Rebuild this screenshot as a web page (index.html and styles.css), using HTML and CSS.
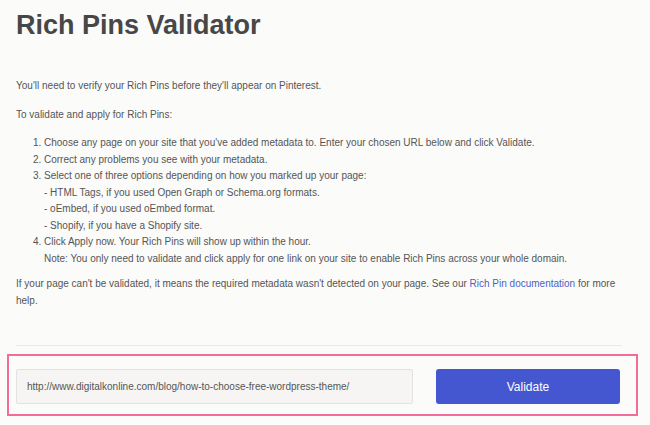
FILE: index.html
```html
<!DOCTYPE html>
<html lang="en">
<head>
    <meta charset="UTF-8">
    <meta name="viewport" content="width=device-width, initial-scale=1.0">
    <title>Rich Pins Validator</title>
    <link rel="stylesheet" href="styles.css">
</head>
<body>
    <div class="page">
        <h1>Rich Pins Validator</h1>

        <p class="intro">You'll need to verify your Rich Pins before they'll appear on Pinterest.</p>

        <p>To validate and apply for Rich Pins:</p>
        <ol class="steps">
            <li>Choose any page on your site that you've added metadata to. Enter your chosen URL below and click Validate.</li>
            <li>Correct any problems you see with your metadata.</li>
            <li>Select one of three options depending on how you marked up your page:
                <div>- HTML Tags, if you used Open Graph or Schema.org formats.</div>
                <div>- oEmbed, if you used oEmbed format.</div>
                <div>- Shopify, if you have a Shopify site.</div>
            </li>
            <li>Click Apply now. Your Rich Pins will show up within the hour.
                <div>Note: You only need to validate and click apply for one link on your site to enable Rich Pins across your whole domain.</div>
            </li>
        </ol>

        <p>If your page can't be validated, it means the required metadata wasn't detected on your page. See our <a href="#">Rich Pin documentation</a> for more help.</p>

        <hr class="divider">

        <form class="validate-form">
            <input type="text" class="url-input" value="http://www.digitalkonline.com/blog/how-to-choose-free-wordpress-theme/">
            <button type="button" class="validate-btn">Validate</button>
        </form>
    </div>
</body>
</html>
```

FILE: styles.css
```css
body {
    margin: 0;
    background-color: #fbfbfa;
    font-family: "Liberation Sans", Arial, sans-serif;
    color: #555;
}
.page {
    width: 606px;
    padding: 0 16px;
}
h1 {
    margin: 8px 0 0;
    font-size: 27px;
    line-height: 34px;
    font-weight: bold;
    color: #474747;
}
p {
    margin: 0 0 12px;
    font-size: 10px;
    line-height: 16.5px;
}
.intro {
    margin-top: 36px;
}
.steps {
    margin: 0 0 9px;
    padding: 0 0 0 28px;
    list-style-position: outside;
    font-size: 10px;
    line-height: 16.5px;
}
a {
    color: #4d5fc6;
    text-decoration: none;
}
.divider {
    margin: 36px 0 0;
    border: none;
    border-top: 1px solid #e8e8e6;
}
.validate-form {
    display: flex;
    gap: 23px;
    margin: 8px -16px 0 -9px;
    padding: 13px 16px 10px 7px;
    border: 2px solid #f36b9a;
}
.url-input {
    width: 397px;
    height: 35px;
    box-sizing: border-box;
    padding: 0 10px;
    border: 1px solid #e2e2e2;
    border-radius: 2px;
    background-color: #f6f5f3;
    font-family: "Liberation Sans", Arial, sans-serif;
    font-size: 10px;
    color: #555;
}
.validate-btn {
    flex: 1;
    height: 35px;
    border: none;
    border-radius: 3px;
    background-color: #4456d0;
    color: white;
    font-family: "Liberation Sans", Arial, sans-serif;
    font-size: 12px;
    cursor: pointer;
}
```
